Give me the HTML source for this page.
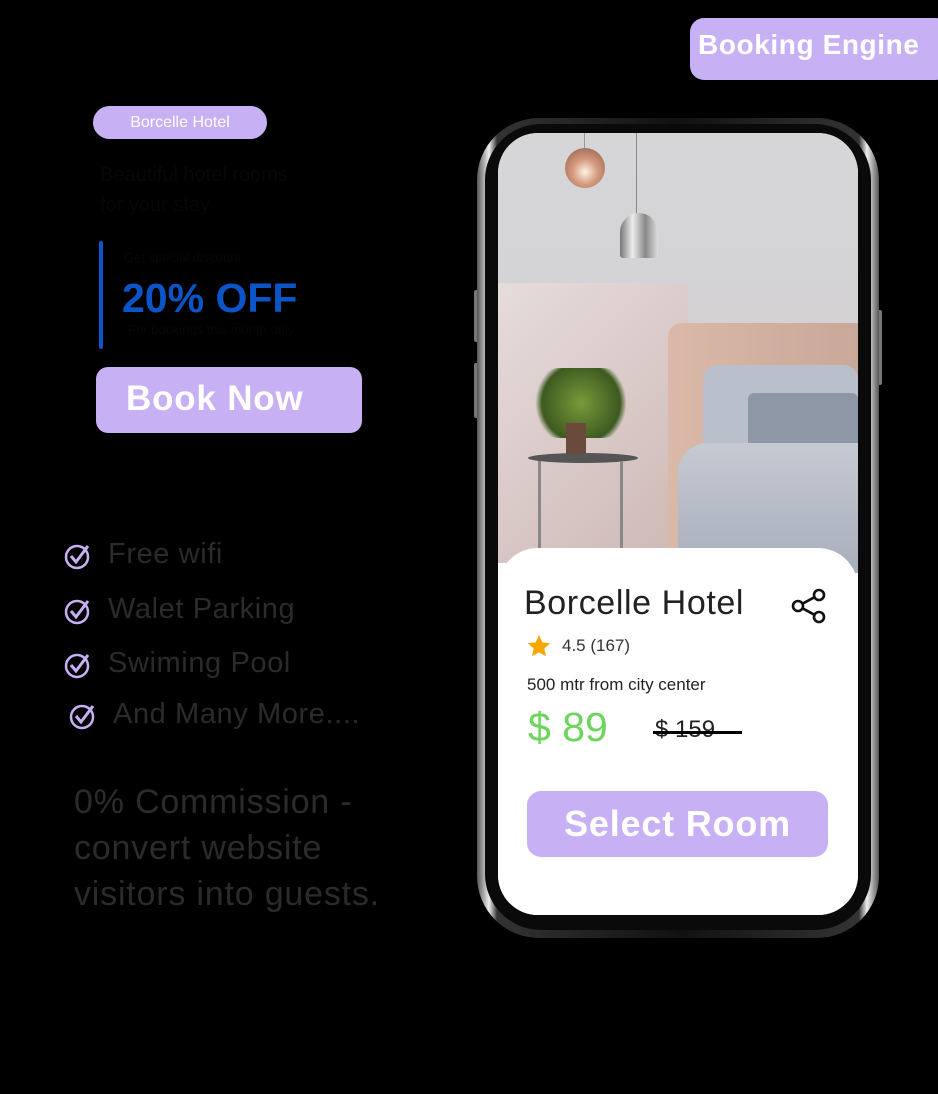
<!DOCTYPE html>
<html><head><meta charset="utf-8"><style>
*{margin:0;padding:0;box-sizing:border-box}
body{width:938px;height:1094px;background:#000;position:relative;overflow:hidden;font-family:"Liberation Sans",sans-serif}
.a{position:absolute}
.pill{background:#c8b0f4;color:#fff}
.feat{color:#2b2b2b;font-size:29px;left:108px;letter-spacing:0.6px}
.chk{left:64px;width:28px;height:28px}
</style></head><body>
<div class="a pill" style="left:690px;top:18px;width:260px;height:62px;border-radius:14px;font-weight:bold;font-size:28px;letter-spacing:0.6px;padding:11px 0 0 8px">Booking Engine</div>
<div class="a pill" style="left:93px;top:106px;width:174px;height:33px;border-radius:17px;font-size:16px;text-align:center;line-height:33px">Borcelle Hotel</div>
<div class="a" style="left:100px;top:160px;color:#070707;font-size:20px;line-height:30px">Beautiful hotel rooms<br>for your stay</div>
<div class="a" style="left:99px;top:241px;width:4px;height:108px;background:#0b55c8;border-radius:2px"></div>
<div class="a" style="left:124px;top:250px;color:#070707;font-size:13px">Get special discount</div>
<div class="a" style="left:122px;top:275px;color:#0b55c8;font-size:41px;font-weight:bold">20% OFF</div>
<div class="a" style="left:128px;top:322px;color:#070707;font-size:13px">For bookings this month only</div>
<div class="a pill" style="left:96px;top:367px;width:266px;height:66px;border-radius:12px;font-weight:bold;font-size:35px;letter-spacing:0.8px;padding:12px 0 0 30px">Book Now</div>

<svg class="a chk" style="top:542px" viewBox="0 0 28 28"><circle cx="13" cy="15" r="11" fill="none" stroke="#c8b0f4" stroke-width="2.5"/><path d="M7 14l5 6 12-16" fill="none" stroke="#c8b0f4" stroke-width="3"/></svg>
<div class="a feat" style="top:538px">Free wifi</div>
<svg class="a chk" style="top:597px" viewBox="0 0 28 28"><circle cx="13" cy="15" r="11" fill="none" stroke="#c8b0f4" stroke-width="2.5"/><path d="M7 14l5 6 12-16" fill="none" stroke="#c8b0f4" stroke-width="3"/></svg>
<div class="a feat" style="top:593px">Walet Parking</div>
<svg class="a chk" style="top:651px" viewBox="0 0 28 28"><circle cx="13" cy="15" r="11" fill="none" stroke="#c8b0f4" stroke-width="2.5"/><path d="M7 14l5 6 12-16" fill="none" stroke="#c8b0f4" stroke-width="3"/></svg>
<div class="a feat" style="top:647px">Swiming Pool</div>
<svg class="a chk" style="top:702px;left:69px" viewBox="0 0 28 28"><circle cx="13" cy="15" r="11" fill="none" stroke="#c8b0f4" stroke-width="2.5"/><path d="M7 14l5 6 12-16" fill="none" stroke="#c8b0f4" stroke-width="3"/></svg>
<div class="a feat" style="top:698px;left:113px">And Many More....</div>
<div class="a" style="left:74px;top:779px;color:#2b2b2b;font-size:34px;letter-spacing:0.8px;line-height:46px">0% Commission -<br>convert website<br>visitors into guests.</div>

<div class="a" style="left:474px;top:290px;width:5px;height:52px;background:#777;border-radius:2px"></div>
<div class="a" style="left:474px;top:363px;width:5px;height:55px;background:#777;border-radius:2px"></div>
<div class="a" style="left:877px;top:310px;width:5px;height:75px;background:#777;border-radius:2px"></div>
<div class="a" style="left:477px;top:118px;width:402px;height:820px;border-radius:62px;background:linear-gradient(90deg,#555,#eee 3%,#333 5%,#111 50%,#333 95%,#eee 97%,#555);"></div>
<div class="a" style="left:485px;top:124px;width:386px;height:806px;border-radius:56px;background:#0a0a0a"></div>
<div class="a" style="left:498px;top:133px;width:360px;height:782px;border-radius:40px;overflow:hidden;background:#fff">
 <div class="a" style="left:0;top:0;width:360px;height:430px;background:linear-gradient(180deg,#d6d6d9 0%,#d4d2d4 40%,#d9c8c4 100%)"></div>
 <div class="a" style="left:0;top:150px;width:190px;height:280px;background:linear-gradient(135deg,#e6dcdc,#cdb8b4)"></div>
 <div class="a" style="left:86px;top:0;width:1px;height:20px;background:#999"></div>
 <div class="a" style="left:67px;top:15px;width:40px;height:40px;border-radius:50%;background:radial-gradient(circle at 50% 60%,#fff2e6,#d59a7e 40%,#8b5a45)"></div>
 <div class="a" style="left:138px;top:0;width:1px;height:85px;background:#888"></div>
 <div class="a" style="left:122px;top:80px;width:38px;height:45px;border-radius:19px 19px 3px 3px;background:linear-gradient(90deg,#777,#eee,#888,#ddd)"></div>
 <div class="a" style="left:170px;top:190px;width:190px;height:250px;border-radius:14px 0 0 0;background:linear-gradient(90deg,#dbb8a8,#c9a899)"></div>
 <div class="a" style="left:205px;top:232px;width:155px;height:90px;border-radius:14px;background:#b9c0cb"></div>
 <div class="a" style="left:250px;top:260px;width:110px;height:58px;border-radius:6px;background:#8e97a6"></div>
 <div class="a" style="left:180px;top:310px;width:180px;height:130px;border-radius:30px 0 0 0;background:linear-gradient(180deg,#c5cad3,#a8afbb)"></div>
 <div class="a" style="left:28px;top:235px;width:110px;height:70px;border-radius:40px;background:radial-gradient(circle,#7a9a3a,#3d5a20 60%,transparent 70%)"></div>
 <div class="a" style="left:68px;top:290px;width:20px;height:35px;background:#6b4a3c"></div>
 <div class="a" style="left:30px;top:320px;width:110px;height:10px;border-radius:50%;background:#555"></div>
 <div class="a" style="left:40px;top:328px;width:3px;height:100px;background:#888"></div>
 <div class="a" style="left:122px;top:328px;width:3px;height:100px;background:#888"></div>
 <div class="a" style="left:0;top:415px;width:360px;height:380px;border-radius:40px 40px 0 0;background:#fff"></div>
</div>
<div class="a" style="left:524px;top:584px;color:#222;font-size:34px;letter-spacing:0.6px">Borcelle Hotel</div>
<svg class="a" style="left:790px;top:588px" width="38" height="36" viewBox="0 0 38 36"><g fill="none" stroke="#111" stroke-width="2.6"><circle cx="29" cy="7" r="5"/><circle cx="8" cy="18" r="5"/><circle cx="29" cy="29" r="5"/><path d="M12.5 15.7l12-6.5M12.5 20.3l12 6.5"/></g></svg>
<svg class="a" style="left:526px;top:634px" width="26" height="25" viewBox="0 0 24 24"><path d="M12 1l3.2 7 7.6.8-5.7 5.1 1.6 7.5L12 17.6 5.3 21.4l1.6-7.5L1.2 8.8 8.8 8z" fill="#f6a800"/></svg>
<div class="a" style="left:562px;top:636px;color:#333;font-size:17px">4.5 (167)</div>
<div class="a" style="left:527px;top:675px;color:#222;font-size:17px">500 mtr from city center</div>
<div class="a" style="left:528px;top:704px;color:#6dd45c;font-size:41px">$ 89</div>
<div class="a" style="left:655px;top:716px;color:#222;font-size:24px">$ 159</div>
<div class="a" style="left:653px;top:731px;width:89px;height:3px;background:#000"></div>
<div class="a pill" style="left:527px;top:791px;width:301px;height:66px;border-radius:14px;font-weight:bold;font-size:36px;letter-spacing:0.8px;text-align:center;line-height:66px">Select Room</div>
</body></html>
